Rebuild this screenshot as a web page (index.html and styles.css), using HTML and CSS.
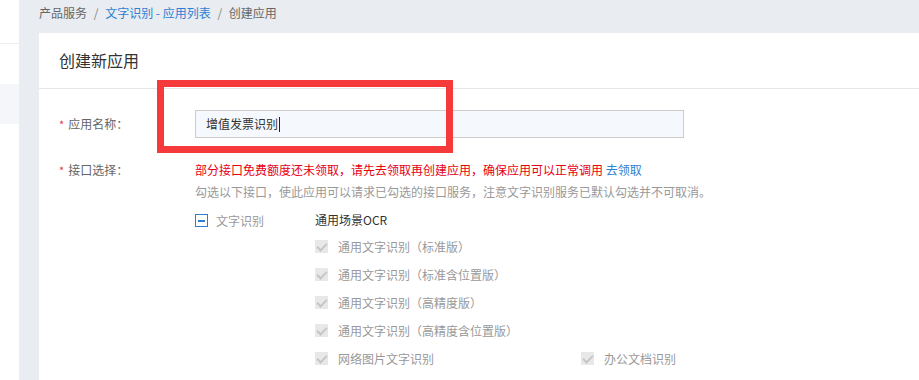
FILE: index.html
```html
<!DOCTYPE html>
<html>
<head>
    <title>创建应用 - 文字识别</title>
    <link rel="stylesheet" href="styles.css">
</head>
<body>
    <div class="sidebar">
        <div class="sidebar-top"></div>
        <div class="sidebar-active"></div>
    </div>
    <div class="main">
        <div class="breadcrumb">
            <span>产品服务</span>
            <span class="sep">/</span>
            <a href="#">文字识别 - 应用列表</a>
            <span class="sep">/</span>
            <span>创建应用</span>
        </div>
        <div class="card">
            <div class="card-title">创建新应用</div>
            <div class="form">
                <div class="form-row">
                    <label class="form-label"><i>*</i>应用名称：</label>
                    <div class="form-field">
                        <div class="input">增值发票识别<span class="cursor"></span></div>
                    </div>
                </div>
                <div class="form-row api-row">
                    <label class="form-label"><i>*</i>接口选择：</label>
                    <div class="form-field">
                        <div class="warn">部分接口免费额度还未领取，请先去领取再创建应用，确保应用可以正常调用 <a href="#">去领取</a></div>
                        <div class="tip">勾选以下接口，使此应用可以请求已勾选的接口服务，注意文字识别服务已默认勾选并不可取消。</div>
                        <div class="tree">
                            <div class="tree-node">
                                <span class="minus-box"></span>
                                <span>文字识别</span>
                            </div>
                            <div class="tree-children">
                                <div class="group-title">通用场景OCR</div>
                                <div class="check-grid">
                                    <div class="check"><span class="box"></span>通用文字识别（标准版）</div>
                                    <div class="check"></div>
                                    <div class="check"><span class="box"></span>通用文字识别（标准含位置版）</div>
                                    <div class="check"></div>
                                    <div class="check"><span class="box"></span>通用文字识别（高精度版）</div>
                                    <div class="check"></div>
                                    <div class="check"><span class="box"></span>通用文字识别（高精度含位置版）</div>
                                    <div class="check"></div>
                                    <div class="check"><span class="box"></span>网络图片文字识别</div>
                                    <div class="check"><span class="box"></span>办公文档识别</div>
                                </div>
                            </div>
                        </div>
                    </div>
                </div>
            </div>
            <div class="highlight"></div>
        </div>
    </div>
</body>
</html>
```

FILE: styles.css
```css
body {
    margin: 0;
    height: 380px;
    overflow: hidden;
    display: flex;
    background-color: #e9ecf0;
    font-family: "Microsoft YaHei", "Noto Sans CJK SC", sans-serif;
    font-size: 12px;
    color: #666;
}
a {
    color: #2d7fd3;
    text-decoration: none;
}
.sidebar {
    width: 19px;
    background-color: #fff;
    flex-shrink: 0;
}
.sidebar-top {
    height: 43px;
    border-bottom: 1px solid #eceef1;
}
.sidebar-active {
    margin-top: 40px;
    height: 40px;
    background-color: #f4f6f9;
}
.main {
    flex: 1;
    padding-left: 20px;
    display: flex;
    flex-direction: column;
}
.breadcrumb {
    height: 33px;
    line-height: 26px;
    color: #666;
}
.breadcrumb .sep {
    margin: 0 4px;
    color: #888;
}
.card {
    flex: 1;
    background-color: #fff;
    position: relative;
}
.card-title {
    height: 55px;
    line-height: 55px;
    padding-left: 20px;
    font-size: 16px;
    color: #333;
    border-bottom: 1px solid #e6e6e6;
}
.form {
    padding: 21px 0 0 20px;
}
.form-row {
    display: flex;
}
.form-label {
    width: 136px;
    flex-shrink: 0;
    line-height: 28px;
    color: #666;
}
.form-label i {
    font-style: normal;
    color: #e4393c;
    margin-right: 4px;
    font-size: 11px;
}
.input {
    width: 477px;
    height: 26px;
    line-height: 26px;
    padding-left: 10px;
    border: 1px solid #ccc;
    background-color: #f5f8fc;
    color: #333;
    display: flex;
    align-items: center;
}
.cursor {
    display: inline-block;
    width: 1px;
    height: 15px;
    background-color: #222;
    margin-left: 1px;
}
.api-row {
    margin-top: 21px;
}
.api-row .form-label {
    line-height: 22px;
}
.warn {
    line-height: 22px;
    color: #e60012;
}
.tip {
    line-height: 22px;
    color: #999;
}
.tree {
    display: flex;
    margin-top: 5px;
}
.tree-node {
    width: 120px;
    height: 24px;
    display: flex;
    align-items: center;
    color: #999;
}
.minus-box {
    width: 11px;
    height: 11px;
    border: 1px solid #2d7fd3;
    margin-right: 8px;
    position: relative;
}
.minus-box::after {
    content: "";
    position: absolute;
    left: 2px;
    top: 5px;
    width: 7px;
    height: 2px;
    background-color: #2d7fd3;
}
.group-title {
    line-height: 24px;
    color: #333;
}
.check-grid {
    display: grid;
    grid-template-columns: 266px 200px;
}
.check {
    height: 28px;
    display: flex;
    align-items: center;
    color: #999;
}
.box {
    width: 13px;
    height: 13px;
    margin-right: 10px;
    background-color: #e8e8e8;
    position: relative;
}
.box::after {
    content: "";
    position: absolute;
    left: 4px;
    top: 1px;
    width: 4px;
    height: 8px;
    border: solid #c6c6c6;
    border-width: 0 2px 2px 0;
    transform: rotate(45deg);
}
.highlight {
    position: absolute;
    left: 118px;
    top: 47px;
    width: 282px;
    height: 59px;
    border: 7px solid #f6393b;
}
```
